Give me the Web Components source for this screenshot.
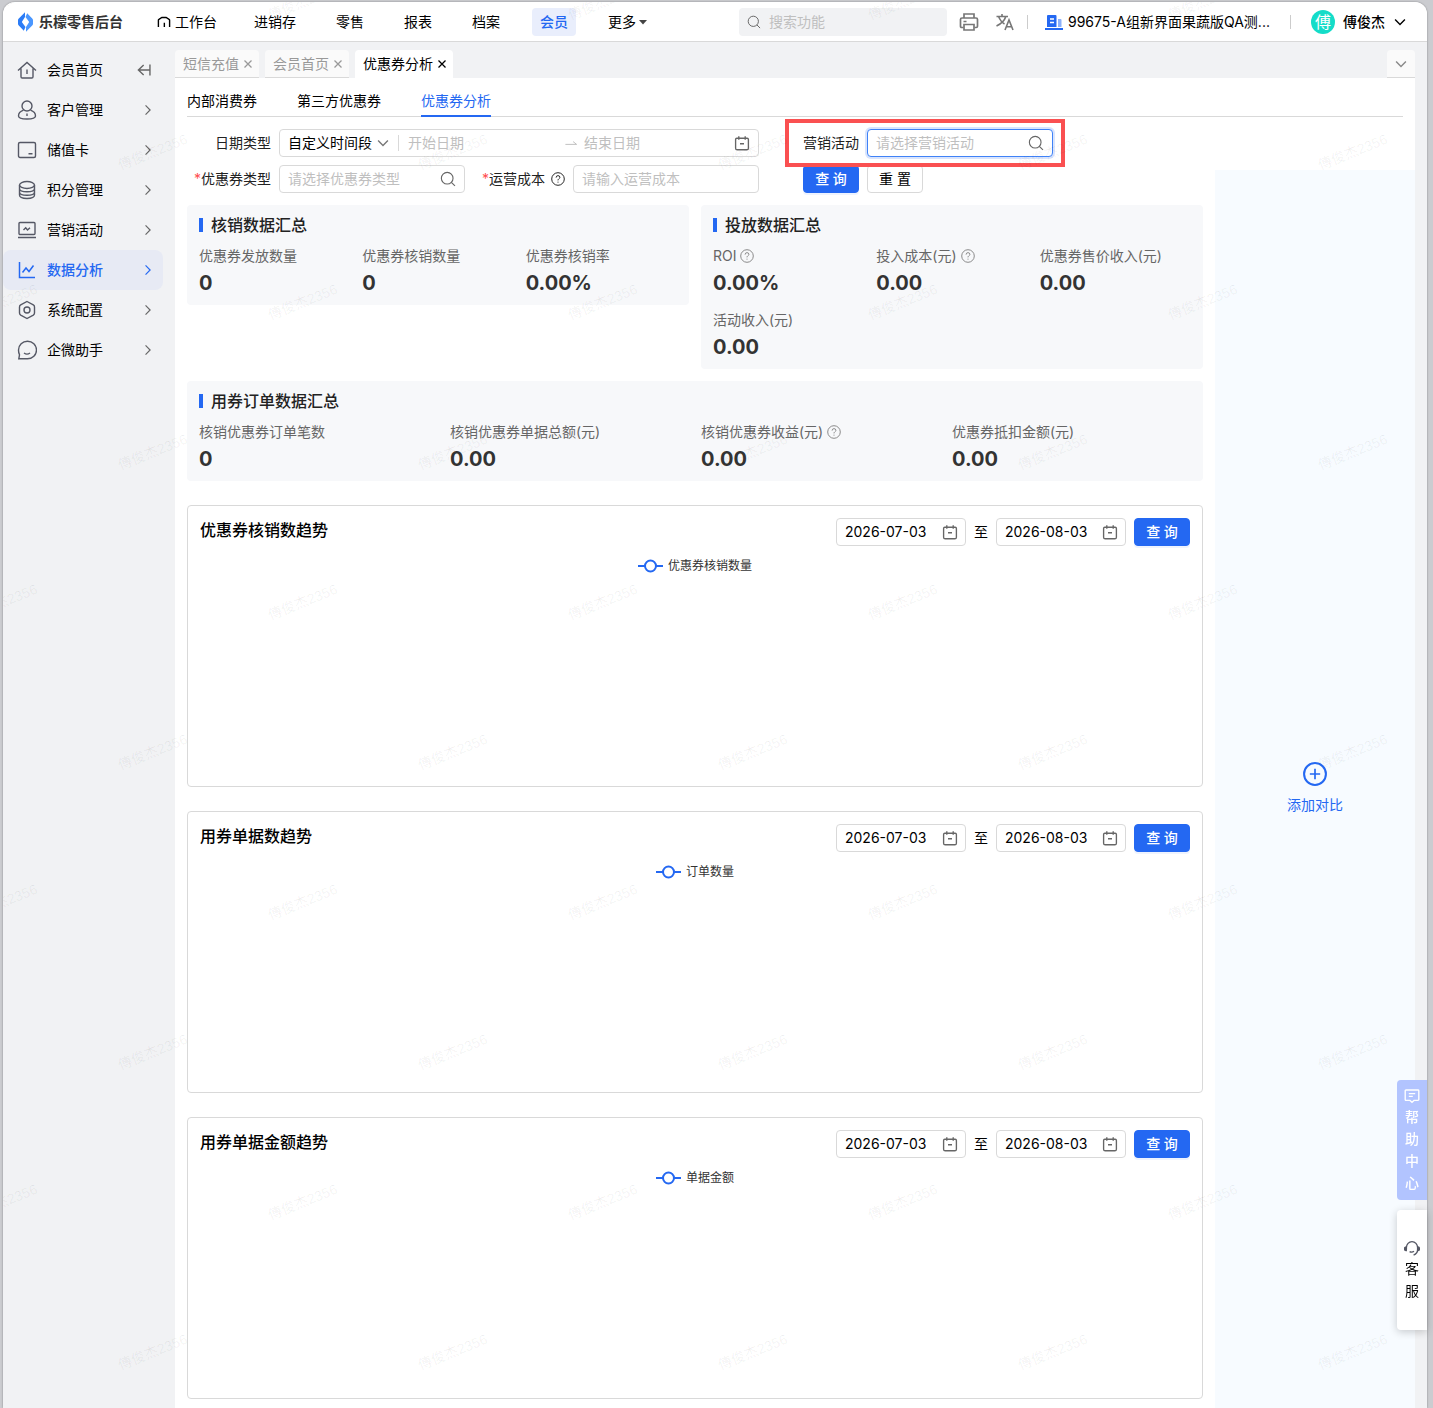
<!DOCTYPE html>
<html lang="zh-CN">
<head>
<meta charset="utf-8">
<meta name="viewport" content="width=device-width, initial-scale=1">
<title>优惠券分析</title>
<style>
:root {
  --blue: #2468f2;
  --line: #d9d9d9;
  --bg: #f1f2f4;
  --soft: #f7f8fa;
}

* { box-sizing: border-box; }

body {
  margin: 0;
  background: #cbccd0;
  color: #000;
  font: 14px/22px Inter, "Noto Sans CJK SC", sans-serif;
}
</style>
</head>
<body>

<app-frame>
  <top-bar slot="top"></top-bar>
  <side-nav slot="side">
    <side-item icon="home" first>会员首页</side-item>
    <side-item icon="user">客户管理</side-item>
    <side-item icon="card">储值卡</side-item>
    <side-item icon="coins">积分管理</side-item>
    <side-item icon="laptop">营销活动</side-item>
    <side-item icon="chart" active>数据分析</side-item>
    <side-item icon="hex">系统配置</side-item>
    <side-item icon="chat">企微助手</side-item>
  </side-nav>
  <page-tabs slot="tabs">
    <page-tab>短信充值</page-tab>
    <page-tab>会员首页</page-tab>
    <page-tab active>优惠券分析</page-tab>
  </page-tabs>

  <coupon-page>
    <filter-form slot="filter"></filter-form>
    <stat-panel heading="核销数据汇总" cols="3">
      <stat-item value="0">优惠券发放数量</stat-item>
      <stat-item value="0">优惠券核销数量</stat-item>
      <stat-item value="0.00%">优惠券核销率</stat-item>
    </stat-panel>
    <stat-panel heading="投放数据汇总" cols="3">
      <stat-item value="0.00%" help>ROI</stat-item>
      <stat-item value="0.00" help>投入成本(元)</stat-item>
      <stat-item value="0.00">优惠券售价收入(元)</stat-item>
      <stat-item value="0.00">活动收入(元)</stat-item>
    </stat-panel>
    <stat-panel heading="用券订单数据汇总" cols="4" wide>
      <stat-item value="0">核销优惠券订单笔数</stat-item>
      <stat-item value="0.00">核销优惠券单据总额(元)</stat-item>
      <stat-item value="0.00" help>核销优惠券收益(元)</stat-item>
      <stat-item value="0.00">优惠券抵扣金额(元)</stat-item>
    </stat-panel>
    <trend-card slot="charts" heading="优惠券核销数趋势" legend="优惠券核销数量"></trend-card>
    <trend-card slot="charts" heading="用券单据数趋势" legend="订单数量"></trend-card>
    <trend-card slot="charts" heading="用券单据金额趋势" legend="单据金额"></trend-card>
    <add-compare slot="compare"></add-compare>
  </coupon-page>
</app-frame>
<help-dock></help-dock>

<script>
// shared rules for every shadow root
const base = `
*, *::before { box-sizing: border-box; }
button, input, select { font: inherit; color: inherit; margin: 0; padding: 0; border: 0; background: none; outline: none; }
button, select { cursor: pointer; }
input { min-width: 0; }
input::placeholder { color: #bfbfbf; opacity: 1; }
a { color: inherit; text-decoration: none; }
.btn { width: 56px; height: 28px; border: 1px solid var(--line); border-radius: 4px; background: #fff; white-space: nowrap; }
.btn.primary { background: var(--blue); border-color: var(--blue); color: #fff; font-weight: 500; box-shadow: 0 2px 0 rgba(36,104,242,.08); }
.box { display: flex; align-items: center; height: 28px; border: 1px solid var(--line); border-radius: 4px; background: #fff; padding: 0 8px; }
.box input { flex: 1; width: 0; }
`;

function define(name, html, setup) {
  const template = document.createElement('template');
  template.innerHTML = `<style>${base}</style>${html}`;
  customElements.define(name, class extends HTMLElement {
    constructor() {
      super();
      this.attachShadow({ mode: 'open' });
      this.shadowRoot.appendChild(template.content.cloneNode(true));
    }
    connectedCallback() {
      if (setup) setup(this, this.shadowRoot);
    }
  });
}

// every icon sits on a 20 x 20 grid
const icons = {
  logo: '<g stroke="none"><path d="M10 .2V5L6.800 10l3.700 5-1.700 3.700L3.800 13.600Q3 12.800 3 11.800V8.200Q3 7.200 3.800 6.400Z" fill="#2b7cf6"/><path d="M11 19.800V15l3.200-5-3.700-5 1.700-3.700 5 5.100q.8.8.8 1.800v3.600q0 1-.8 1.800Z" fill="#4a97ff"/></g>',
  work: '<path d="M2 17V7.500q0-.8.7-1.200L7 3.500h6l4.300 2.800q.7.4.7 1.200V17M10.500 17v-6" stroke-width="2"/>',
  search: '<circle cx="9" cy="9" r="7.300"/><path d="M14.200 14.200l4.500 4.500"/>',
  printer: '<g stroke-width="1.700"><path d="M5 6V2h10v4M4.500 15.500H2.800q-1.300 0-1.300-1.300V7.500Q1.500 6 3 6h14q1.500 0 1.500 1.500v6.700q0 1.300-1.300 1.300h-1.700M4.500 9.500h3"/><path d="M5 12.500h10V18H5z"/></g>',
  lang: '<g stroke-width="1.600"><path d="M1.500 4.500h11.500M7 2v2.500M10.800 4.500Q9 10.500 1.500 14M3.500 4.500Q6 10 9.500 12"/><path d="M10 18l4-10 4 10M11.500 14.800h5"/></g>',
  shop: '<path d="M3 15V4q0-1 1-1h7.500q1 0 1 1v11z" fill="#2468f2" stroke="none"/><path d="M14 7h2.500q1 0 1 1v7H14z" fill="#8db1fa" stroke="none"/><path d="M6 7h4M6 10.500h4" stroke="#fff" stroke-width="1.500"/><path d="M1 17h18" stroke="#2468f2" stroke-width="1.800"/>',
  down: '<path d="M3 6.500l7 7 7-7" stroke-width="2"/>',
  right: '<path d="M6.500 3.500L13 10l-6.500 6.500" stroke-width="1.700"/>',
  caret: '<path d="M2 6h16l-8 9z" fill="currentColor" stroke="none"/>',
  close: '<path d="M3 3l14 14M17 3L3 17" stroke-width="2.600"/>',
  collapse: '<path d="M18.500 2v16M2 10H18M9.500 3L2 10l7.500 7" stroke-width="2"/>',
  home: '<path d="M1 10.500l9-8 9 8M4 8.500v8.300q0 1.200 1.200 1.200h9.600q1.200 0 1.200-1.200V8.500M10 9.500v4.500"/>',
  user: '<circle cx="10" cy="6" r="5"/><path d="M6.500 10.200Q1.500 12 1.500 16q0 3 8.500 3t8.500-3q0-4-5-5.800M10 13.500v2.500"/>',
  card: '<rect x="1.500" y="2.500" width="17" height="15" rx="1.500"/><path d="M11.500 13.800h4"/>',
  coins: '<ellipse cx="10" cy="5" rx="7.500" ry="3.500"/><path d="M2.500 5v10c0 4.600 15 4.600 15 0V5M2.500 8.500c0 4.400 15 4.400 15 0M2.500 12c0 4.400 15 4.400 15 0"/>',
  laptop: '<rect x="2" y="2.500" width="16" height="12" rx="1"/><path d="M1 17.500h18M6.500 10l2.200-2.300 1.800 2.300L13 7.700"/>',
  chart: '<path d="M2.500 2v15.500H18M5.500 12.500L9 8l3 3.500L16.500 5.500" stroke-width="1.500"/>',
  hex: '<path d="M10 1.500l6.300 3.400q1.200.7 1.200 2v6.200q0 1.300-1.200 2L10 18.500l-6.300-3.400q-1.200-.7-1.200-2V6.900q0-1.300 1.200-2z"/><circle cx="10" cy="10" r="3"/>',
  chat: '<path d="M1.500 10a9 8.800 0 1 1 9 8.800H1.800l.7-4Q1.500 12.500 1.500 10zM7 13q3 2.200 6 0"/>',
  calendar: '<path d="M3.500 4h13q1.500 0 1.500 1.500v11q0 2-2 2H4q-2 0-2-2v-11Q2 4 3.500 4zM6 1.500V6M14 1.500V6M7.500 11h5" stroke-width="1.700"/>',
  help: '<circle cx="10" cy="10" r="9"/><path d="M7.300 8q0-2.800 2.700-2.800T12.700 7.700Q12.700 9 11 10q-1 .6-1 2M10 13.800v1.400"/>',
  arrow: '<path d="M2 12h16l-5-4" stroke-width="1.300"/>',
  plus: '<circle cx="10" cy="10" r="9.100" stroke-width="1.700"/><path d="M10 5.700v8.600M5.700 10h8.600" stroke-width="1.400"/>',
  message: '<path d="M2.500 2.500h15q1 0 1 1v11q0 1-1 1h-5L10 18l-2.500-2.500h-5q-1 0-1-1v-11q0-1 1-1zM6 7h8M6 10.500h5" stroke-width="1.700"/>',
  service: '<path d="M3 12V9.500a7 7.500 0 0 1 14 0V12q0 5-5 7M7 14.500q3 1.500 5.500-.5" stroke-width="1.700"/><path d="M3 8.500Q.5 8.500.5 11T3 13.500zM17 8.500q2.500 0 2.500 2.500T17 13.500z" fill="currentColor"/>'
};

define('app-icon', `
<style>
:host { display: inline-flex; flex: none; width: 20px; height: 20px; }
svg { width: 100%; height: 100%; display: block; }
</style>
<svg viewBox="0 0 20 20" fill="none" stroke="currentColor" stroke-width="1.400" aria-hidden="true"></svg>
`, (el, root) => {
  root.querySelector('svg').innerHTML = icons[el.getAttribute('name')];
});

define('app-frame', `
<style>
:host { display: flex; flex-direction: column; position: relative; overflow: hidden; min-height: calc(100vh - 2px); margin: 2px 6px 0 3px; background: var(--bg); border-radius: 12px 12px 0 0; box-shadow: 0 0 2px rgba(0,0,0,.4); }
.body { flex: 1; display: flex; }
main { flex: 1; min-width: 0; display: flex; flex-direction: column; padding: 8px 12px 0 0; }
</style>
<slot name="top"></slot>
<div class="body">
  <slot name="side"></slot>
  <main><slot name="tabs"></slot><slot></slot></main>
</div>
<water-mark></water-mark>
`);

define('top-bar', `
<style>
:host { display: flex; align-items: center; height: 40px; padding: 0 20px 0 12px; background: #fff; border-bottom: 1px solid var(--line); white-space: nowrap; }
.brand { display: flex; align-items: center; gap: 4px; font-weight: 700; color: #333; }
.work { display: flex; align-items: center; gap: 4px; margin-left: 34px; color: #000; }
.work app-icon { width: 14px; height: 14px; }
nav { display: flex; gap: 24px; margin-left: 29px; }
nav a { padding: 3px 8px; border-radius: 4px; }
nav a.on { background: #e9eefc; color: var(--blue); font-weight: 500; }
nav app-icon { width: 10px; height: 10px; margin-left: 2px; vertical-align: 0; color: #444; }
.search { display: flex; align-items: center; gap: 8px; width: 208px; height: 28px; margin-left: auto; padding: 0 8px; background: var(--bg); border-radius: 4px; color: #666; }
.search app-icon { width: 14px; height: 14px; }
.search input { flex: 1; }
.tools { display: flex; gap: 16px; margin: 0 12px; color: #777; }
.tools button { display: flex; }
i { width: 1px; height: 14px; background: #ccc; }
.org { display: flex; align-items: center; gap: 4px; margin: 0 20px 0 16px; }
.org span { width: 202px; }
.me { display: flex; align-items: center; gap: 8px; margin-left: 20px; font-weight: 500; }
.me b { width: 24px; height: 24px; border-radius: 50%; background: #14dcc8; color: #fff; font-size: 16px; line-height: 24px; font-weight: 400; text-align: center; }
.me app-icon { width: 14px; height: 14px; }
</style>
<div class="brand"><app-icon name="logo"></app-icon>乐檬零售后台</div>
<a class="work" href="#"><app-icon name="work"></app-icon>工作台</a>
<nav>
  <a href="#">进销存</a><a href="#">零售</a><a href="#">报表</a><a href="#">档案</a><a class="on" href="#">会员</a><a href="#">更多<app-icon name="caret"></app-icon></a>
</nav>
<label class="search"><app-icon name="search"></app-icon><input type="text" placeholder="搜索功能" aria-label="搜索功能"></label>
<div class="tools">
  <button aria-label="打印"><app-icon name="printer"></app-icon></button>
  <button aria-label="语言"><app-icon name="lang"></app-icon></button>
</div>
<i></i>
<div class="org"><app-icon name="shop"></app-icon><span>99675-A组新界面果蔬版QA测...</span></div>
<i></i>
<button class="me"><b>傅</b>傅俊杰<app-icon name="down"></app-icon></button>
`);

define('side-nav', `
<style>
:host { display: block; flex: none; width: 172px; padding: 8px 12px 0 0; }
</style>
<nav><slot></slot></nav>
`);

define('side-item', `
<style>
:host { display: block; }
a { display: flex; align-items: center; gap: 10px; height: 40px; padding: 0 8px 0 14px; border-radius: 8px; }
app-icon { color: #555865; }
.end { width: 14px; height: 14px; margin-left: auto; color: #666; }
:host([first]) a { padding-right: 12px; }
:host([active]) a { background: #e7eaf4; color: var(--blue); font-weight: 500; }
:host([active]) app-icon { color: var(--blue); }
</style>
<a href="#"><app-icon></app-icon><slot></slot><app-icon class="end" name="right"></app-icon></a>
`, (el, root) => {
  const icon = document.createElement('app-icon');
  icon.setAttribute('name', el.getAttribute('icon'));
  root.querySelector('app-icon').replaceWith(icon);
  if (el.hasAttribute('first')) {
    const end = document.createElement('app-icon');
    end.className = 'end';
    end.setAttribute('name', 'collapse');
    root.querySelector('.end').replaceWith(end);
  }
});

define('page-tabs', `
<style>
:host { display: flex; gap: 6px; height: 28px; }
button { display: flex; align-items: center; justify-content: center; width: 28px; margin-left: auto; background: #fafafa; border-bottom: 1px solid var(--line); border-radius: 4px 4px 0 0; color: #888; }
app-icon { width: 14px; height: 14px; }
</style>
<slot></slot>
<button aria-label="全部标签"><app-icon name="down"></app-icon></button>
`);

define('page-tab', `
<style>
:host { display: flex; align-items: center; gap: 4px; padding: 0 6px 0 8px; background: #fafafa; border-bottom: 1px solid var(--line); border-radius: 4px 4px 0 0; color: #999; white-space: nowrap; }
:host([active]) { background: #fff; border-color: #fff; color: #000; }
button { display: flex; }
app-icon { width: 10px; height: 10px; }
</style>
<slot></slot>
<button aria-label="关闭"><app-icon name="close"></app-icon></button>
`);

define('coupon-page', `
<style>
:host { flex: 1; display: flex; flex-direction: column; background: #fff; }
.tabs { display: flex; gap: 40px; height: 39px; margin: 0 12px; border-bottom: 1px solid var(--line); }
.tabs a { height: 39px; padding-top: 12px; border-bottom: 2px solid transparent; }
.tabs a.on { color: var(--blue); border-color: var(--blue); }
.body { flex: 1; display: flex; }
.left { flex: 1; min-width: 0; padding: 12px 12px 9px; }
.stats { display: grid; grid-template-columns: 1fr 1fr; gap: 12px; align-items: start; margin: 12px 0 24px; }
.charts { display: grid; gap: 24px; }
</style>
<nav class="tabs"><a href="#">内部消费券</a><a href="#">第三方优惠券</a><a class="on" href="#">优惠券分析</a></nav>
<div class="body">
  <div class="left">
    <slot name="filter"></slot>
    <div class="stats"><slot></slot></div>
    <div class="charts"><slot name="charts"></slot></div>
  </div>
  <slot name="compare"></slot>
</div>
`);

define('filter-form', `
<style>
:host { display: block; }
form { display: grid; grid-template-columns: repeat(3, 278px); gap: 8px 16px; }
.item { display: flex; align-items: center; gap: 8px; position: relative; }
.item > label { flex: none; width: 84px; text-align: right; color: #222; white-space: nowrap; }
.item > .box { flex: 1; min-width: 0; }
.wide { grid-column: span 2; }
em { color: #ff4d4f; font-style: normal; }
label app-icon { width: 14px; height: 14px; margin-left: 6px; vertical-align: -2px; }
.box > app-icon { width: 16px; height: 16px; color: #666; }
.pick { display: flex; align-items: center; }
.pick select { appearance: none; width: 88px; }
.pick app-icon { width: 14px; height: 14px; color: #777; }
.box > i { width: 1px; height: 16px; margin: 0 9px 0 8px; background: var(--line); }
.box > .to { width: 14px; height: 14px; margin: 0 6px; color: #bbb; }
.focus { border-color: #3f82f7; box-shadow: 0 0 0 2px #d8e4fd; }
/* frame drawn over the highlighted field */
.mark::after { content: ""; position: absolute; inset: -10px -12px -10px 10px; border: 4px solid #fa5051; pointer-events: none; z-index: 1; }
.actions { display: flex; gap: 8px; padding-left: 28px; }
</style>
<form>
  <div class="item wide">
    <label for="kind">日期类型</label>
    <div class="box">
      <span class="pick"><select id="kind"><option>自定义时间段</option></select><app-icon name="down"></app-icon></span>
      <i></i>
      <input type="text" placeholder="开始日期" aria-label="开始日期">
      <app-icon class="to" name="arrow"></app-icon>
      <input type="text" placeholder="结束日期" aria-label="结束日期">
      <app-icon name="calendar"></app-icon>
    </div>
  </div>
  <div class="item mark">
    <label for="activity">营销活动</label>
    <div class="box focus"><input id="activity" type="text" placeholder="请选择营销活动"><app-icon name="search"></app-icon></div>
  </div>
  <div class="item">
    <label for="type"><em>*</em>优惠券类型</label>
    <div class="box"><input id="type" type="text" placeholder="请选择优惠券类型"><app-icon name="search"></app-icon></div>
  </div>
  <div class="item">
    <label for="cost"><em>*</em>运营成本<app-icon name="help"></app-icon></label>
    <div class="box"><input id="cost" type="text" placeholder="请输入运营成本"></div>
  </div>
  <div class="actions">
    <button type="button" class="btn primary">查 询</button>
    <button type="reset" class="btn">重 置</button>
  </div>
</form>
`);

define('stat-panel', `
<style>
:host { display: block; padding: 8px 12px; background: var(--soft); border-radius: 4px; }
:host([wide]) { grid-column: 1 / -1; }
h3 { display: flex; align-items: center; gap: 8px; margin: 0 0 8px; font-size: 16px; line-height: 24px; font-weight: 500; color: #222; }
h3::before { content: ""; width: 4px; height: 14px; background: var(--blue); }
.grid { display: grid; gap: 12px; }
</style>
<h3></h3>
<div class="grid"><slot></slot></div>
`, (el, root) => {
  root.querySelector('h3').textContent = el.getAttribute('heading');
  root.querySelector('.grid').style.gridTemplateColumns = `repeat(${el.getAttribute('cols')}, minmax(0, 1fr))`;
});

define('stat-item', `
<style>
:host { display: block; white-space: nowrap; }
.name { display: flex; align-items: center; gap: 4px; color: #666; }
.name app-icon { display: none; width: 14px; height: 14px; color: #888; }
:host([help]) .name app-icon { display: block; }
.value { margin-top: 2px; font-size: 20px; line-height: 28px; font-weight: 700; color: #333; }
</style>
<div class="name"><span><slot></slot></span><app-icon name="help"></app-icon></div>
<div class="value"></div>
`, (el, root) => {
  root.querySelector('.value').textContent = el.getAttribute('value');
});

define('trend-card', `
<style>
:host { display: block; padding: 12px; border: 1px solid var(--line); border-radius: 4px; }
header { display: flex; }
h3 { flex: 1; margin: 0; font-size: 16px; line-height: 24px; font-weight: 500; }
form { display: flex; align-items: center; gap: 8px; }
.box { width: 130px; }
.box app-icon { width: 16px; height: 16px; margin-right: -1px; color: #666; }
.plot { display: flex; justify-content: center; align-items: flex-start; min-height: 228px; padding-top: 12px; }
.legend { display: flex; align-items: center; gap: 5px; font-size: 12px; line-height: 16px; color: #333; }
svg { display: block; }
</style>
<header>
  <h3></h3>
  <form>
    <div class="box"><input type="text" value="2026-07-03" aria-label="开始日期"><app-icon name="calendar"></app-icon></div>
    <span>至</span>
    <div class="box"><input type="text" value="2026-08-03" aria-label="结束日期"><app-icon name="calendar"></app-icon></div>
    <button type="button" class="btn primary">查 询</button>
  </form>
</header>
<div class="plot">
  <div class="legend">
    <svg width="25" height="14" viewBox="0 0 25 14" fill="#fff" stroke="#2468f2" stroke-width="2"><path d="M0 7h25"/><circle cx="12.500" cy="7" r="5.500"/></svg>
    <span></span>
  </div>
</div>
`, (el, root) => {
  root.querySelector('h3').textContent = el.getAttribute('heading');
  root.querySelector('.legend span').textContent = el.getAttribute('legend');
});

define('add-compare', `
<style>
:host { display: flex; align-items: center; justify-content: center; flex: none; width: 200px; margin-top: 53px; background: #f7fbff; }
button { display: flex; flex-direction: column; align-items: center; gap: 8px; color: var(--blue); }
app-icon { width: 24px; height: 24px; }
</style>
<button><app-icon name="plus"></app-icon>添加对比</button>
`);

define('help-dock', `
<style>
:host { position: fixed; right: 6px; bottom: 78px; z-index: 3; display: flex; flex-direction: column; gap: 10px; }
button { display: flex; flex-direction: column; align-items: center; justify-content: center; width: 30px; height: 120px; border-radius: 4px 0 0 4px; background: #fff; box-shadow: 0 2px 8px rgba(0,0,0,.2); }
button.help { background: #b2c4ff; color: #fff; font-weight: 500; box-shadow: none; }
app-icon { width: 16px; height: 16px; margin: 2px 0; }
.text { width: 14px; overflow-wrap: anywhere; }
.service app-icon { color: #555865; }
</style>
<button class="help"><app-icon name="message"></app-icon><span class="text">帮助中心</span></button>
<button class="service"><app-icon name="service"></app-icon><span class="text">客服</span></button>
`);

define('water-mark', `
<style>
:host { position: absolute; inset: 0; overflow: hidden; pointer-events: none; z-index: 2; }
.sheet { position: absolute; left: -150px; top: -75px; }
.row { display: flex; height: 150px; }
.row:nth-child(even) { margin-left: 150px; }
span { flex: none; display: flex; align-items: center; justify-content: center; width: 300px; }
b { font: 14px/20px "Liberation Sans", "Noto Sans CJK SC", sans-serif; color: rgba(0,0,0,.06); transform: rotate(-22deg); }
</style>
<div class="sheet"></div>
`, (el, root) => {
  const cells = '<span><b>傅俊杰2356</b></span>'.repeat(5);
  root.querySelector('.sheet').innerHTML = `<div class="row">${cells}</div>`.repeat(10);
});
</script>
</body>
</html>
